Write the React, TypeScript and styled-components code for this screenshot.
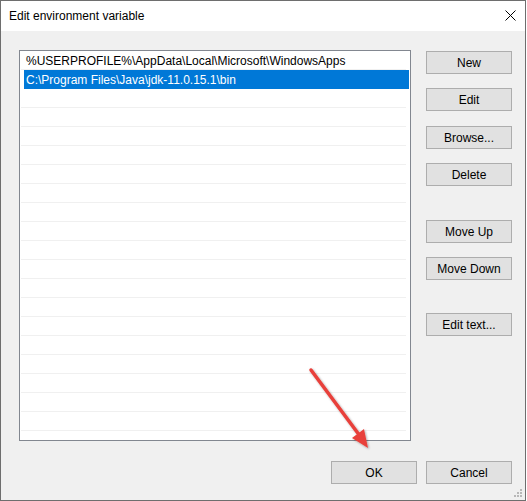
import styled, { createGlobalStyle } from 'styled-components';

const GlobalStyle = createGlobalStyle`
  html, body {
    margin: 0;
    padding: 0;
    background: #ffffff;
  }
  body {
    font-family: 'Liberation Sans', Arial, sans-serif;
    font-size: 12px;
    color: #000000;
  }
`;

const entries = [
  '%USERPROFILE%\\AppData\\Local\\Microsoft\\WindowsApps',
  'C:\\Program Files\\Java\\jdk-11.0.15.1\\bin',
];

const sideButtons: { label: string; gapAbove: number }[] = [
  { label: 'New', gapAbove: 1 },
  { label: 'Edit', gapAbove: 14 },
  { label: 'Browse...', gapAbove: 15 },
  { label: 'Delete', gapAbove: 14 },
  { label: 'Move Up', gapAbove: 34 },
  { label: 'Move Down', gapAbove: 14 },
  { label: 'Edit text...', gapAbove: 33 },
];

const TOTAL_ROWS = 21;

export default function App() {
  const rows = Array.from({ length: TOTAL_ROWS }, (_, i) => entries[i] ?? '');
  return (
    <>
      <GlobalStyle />
      <Window>
        <TitleBar>
          <Title>Edit environment variable</Title>
          <CloseIcon />
        </TitleBar>
        <Body>
          <MainRow>
            <ListBox>
              {rows.map((text, index) => (
                <ListRow key={index} $selected={index === 1}>
                  {text}
                </ListRow>
              ))}
            </ListBox>
            <SideColumn>
              {sideButtons.map((b) => (
                <Button key={b.label} $gapAbove={b.gapAbove}>
                  {b.label}
                </Button>
              ))}
            </SideColumn>
          </MainRow>
          <FooterRow>
            <Button>OK</Button>
            <Button>Cancel</Button>
          </FooterRow>
        </Body>
        <ResizeGrip />
        <Arrow />
      </Window>
    </>
  );
}

function CloseIcon() {
  return (
    <CloseSvg width="11" height="11" viewBox="0 0 11 11">
      <path d="M0.5 0.5 L10.5 10.5 M10.5 0.5 L0.5 10.5" stroke="#000" strokeWidth="1" fill="none" />
    </CloseSvg>
  );
}

function ResizeGrip() {
  const dots = [
    [6, 0],
    [3, 3],
    [6, 3],
    [0, 6],
    [3, 6],
    [6, 6],
  ];
  return (
    <GripSvg width="8" height="8" viewBox="0 0 8 8">
      {dots.map(([x, y], i) => (
        <rect key={i} x={x} y={y} width="2" height="2" fill="#b8b8b8" />
      ))}
    </GripSvg>
  );
}

function Arrow() {
  return (
    <ArrowSvg width="527" height="501" viewBox="0 0 527 501">
      <defs>
        <filter id="shadow" x="-20%" y="-20%" width="140%" height="140%">
          <feDropShadow dx="1" dy="1" stdDeviation="0.8" floodColor="#000" floodOpacity="0.35" />
        </filter>
      </defs>
      <g filter="url(#shadow)">
        <line x1="311" y1="370" x2="360" y2="436" stroke="#e8413b" strokeWidth="3.5" strokeLinecap="round" />
        <polygon points="368,448 352,438 364,429" fill="#e8413b" />
      </g>
    </ArrowSvg>
  );
}

const Window = styled.div`
  position: relative;
  box-sizing: border-box;
  width: 526px;
  height: 501px;
  border: 1px solid #6e6e6e;
  background: #f0f0f0;
  display: flex;
  flex-direction: column;
  overflow: hidden;
`;

const TitleBar = styled.div`
  height: 30px;
  flex-shrink: 0;
  background: #ffffff;
  display: flex;
  align-items: center;
  justify-content: space-between;
  padding: 0 9px 0 8px;
`;

const Title = styled.div`
  font-size: 12px;
  line-height: 30px;
  color: #000000;
`;

const CloseSvg = styled.svg`
  display: block;
  margin-top: -1px;
`;

const Body = styled.div`
  flex: 1;
  display: flex;
  flex-direction: column;
  padding: 19px 13px 0 18px;
`;

const MainRow = styled.div`
  display: flex;
  gap: 15px;
`;

const ListBox = styled.div`
  box-sizing: border-box;
  width: 392px;
  height: 391px;
  border: 1px solid #828790;
  background: #ffffff;
  overflow: hidden;
`;

const ListRow = styled.div<{ $selected?: boolean }>`
  position: relative;
  height: 19px;
  line-height: 20px;
  padding-left: 6px;
  white-space: nowrap;
  color: ${(p) => (p.$selected ? '#ffffff' : '#000000')};
  background: ${(p) =>
    p.$selected
      ? 'linear-gradient(to right, transparent 4px, #0078d7 4px, #0078d7 389px, transparent 389px)'
      : 'transparent'};

  &::after {
    content: '';
    position: absolute;
    left: 1px;
    right: 4px;
    bottom: 0;
    height: 1px;
    background: ${(p) => (p.$selected ? 'transparent' : '#f0f0f0')};
  }
`;

const SideColumn = styled.div`
  display: flex;
  flex-direction: column;
`;

const Button = styled.div<{ $gapAbove?: number }>`
  box-sizing: border-box;
  width: 86px;
  height: 23px;
  margin-top: ${(p) => p.$gapAbove ?? 0}px;
  border: 1px solid #adadad;
  background: #e1e1e1;
  display: flex;
  align-items: center;
  justify-content: center;
  font-size: 12px;
  color: #000000;
`;

const FooterRow = styled.div`
  display: flex;
  justify-content: flex-end;
  gap: 9px;
  margin-top: 20px;
`;

const GripSvg = styled.svg`
  position: absolute;
  right: 3px;
  bottom: 3px;
`;

const ArrowSvg = styled.svg`
  position: absolute;
  left: -1px;
  top: -1px;
  pointer-events: none;
`;
